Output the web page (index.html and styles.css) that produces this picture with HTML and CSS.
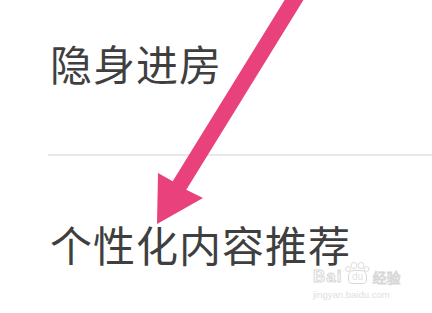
FILE: index.html
```html
<!DOCTYPE html>
<html>
<head>
    <title>设置</title>
    <link rel="stylesheet" href="styles.css">
</head>
<body>
    <div class="screen">
        <div class="item first">隐身进房</div>
        <div class="divider"></div>
        <div class="item second">个性化内容推荐</div>

        <svg class="arrow" width="432" height="313" viewBox="0 0 432 313">
            <polygon fill="#e9417b" points="293.4,-14.2 307,-5.8 186.3,189.7 203,198 157,224 158,173 172.7,181.3"/>
        </svg>

        <div class="watermark">
            <div class="wm-top">
                <span class="wm-bai">Bai</span>
                <span class="wm-paw">
                    <svg class="toes" width="26" height="10" viewBox="0 0 26 10">
                        <g fill="none" stroke="#dcdcdc" stroke-width="1">
                            <ellipse cx="4" cy="7" rx="2.5" ry="2.5"/>
                            <ellipse cx="10" cy="3.5" rx="3" ry="3"/>
                            <ellipse cx="17" cy="3.5" rx="3" ry="3"/>
                            <ellipse cx="22.5" cy="7" rx="2.5" ry="2.5"/>
                        </g>
                    </svg>
                    <span class="wm-du">du</span>
                </span>
                <span class="wm-jy">经验</span>
            </div>
            <div class="wm-url">jingyan.baidu.com</div>
        </div>
    </div>
</body>
</html>
```
FILE: styles.css
```css
body {
    margin: 0;
    background: #fff;
    font-family: "Noto Sans CJK SC", "Noto Sans", sans-serif;
}
.screen {
    position: relative;
    width: 432px;
    height: 313px;
    overflow: hidden;
}
.item {
    font-size: 42px;
    line-height: 42px;
    color: #3f3f3f;
    padding-left: 50px;
    letter-spacing: 1px;
}
.first {
    padding-top: 42px;
}
.divider {
    margin: 70px 0 0 48px;
    height: 2px;
    background: #e8e8e8;
}
.second {
    margin-top: 67px;
}
.arrow {
    position: absolute;
    left: 0;
    top: 0;
}
.watermark {
    position: absolute;
    left: 313px;
    top: 270px;
    color: #e2e2e2;
    font-family: "Liberation Sans", sans-serif;
}
.wm-top {
    display: flex;
    align-items: flex-end;
    gap: 2px;
    height: 14px;
}
.wm-bai {
    font-size: 17px;
    line-height: 14px;
    font-weight: bold;
    letter-spacing: 1px;
    color: #fff;
    -webkit-text-stroke: 1px #d8d8d8;
}
.wm-paw {
    position: relative;
    width: 26px;
    display: flex;
    justify-content: center;
}
.toes {
    position: absolute;
    left: 0;
    bottom: 12px;
}
.wm-du {
    font-size: 10px;
    line-height: 12px;
    padding: 0 3px;
    border: 1px solid #d8d8d8;
    border-radius: 6px 6px 4px 4px;
}
.wm-jy {
    font-family: "Noto Sans CJK SC", sans-serif;
    font-size: 14px;
    line-height: 14px;
    color: #fff;
    -webkit-text-stroke: 1px #d8d8d8;
}
.wm-url {
    font-size: 9.5px;
    line-height: 11px;
    margin-top: 5px;
    color: #e0e0e0;
}
```
